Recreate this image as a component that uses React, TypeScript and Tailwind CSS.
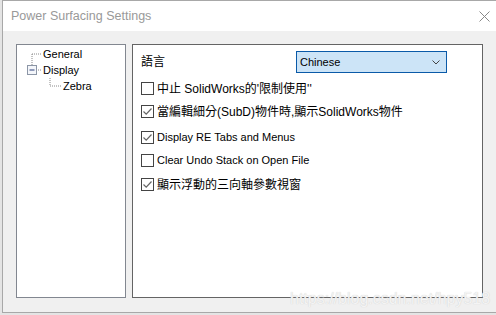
import React from 'react';

const latin = { fontFamily: '"Liberation Sans", Arial, sans-serif' };
const cjk = { fontFamily: '"Liberation Sans", "Noto Sans CJK TC", sans-serif' };

function Check({ checked }: { checked?: boolean }) {
    return (
        <div className="w-[13px] h-[13px] border border-[#444] bg-white flex items-center justify-center shrink-0">
            {checked && (
                <svg width="11" height="11" viewBox="0 0 11 11">
                    <path d="M1.5 5.5 L4.2 8.2 L9.5 2.5" fill="none" stroke="#666" strokeWidth="1.2" />
                </svg>
            )}
        </div>
    );
}

function Row({ checked, label, isCjk, mt }: { checked?: boolean; label: string; isCjk?: boolean; mt: string }) {
    return (
        <div className={`flex items-center gap-[3px] ${mt}`}>
            <Check checked={checked} />
            <span
                className={`${isCjk ? 'text-[12px]' : 'text-[11px]'} text-black leading-none whitespace-nowrap`}
                style={isCjk ? cjk : latin}
            >
                {label}
            </span>
        </div>
    );
}

export default function App() {
    return (
        <div className="w-[496px] h-[315px] bg-[#e4e4e4] relative overflow-hidden">
            <div className="ml-[2px] w-[496px] h-[313px] border border-[#a8a8a8] bg-[#f0f0f0] flex flex-col">
                {/* title bar */}
                <div className="h-[30px] bg-white flex items-center justify-between pl-[8px] pr-[7px] shrink-0">
                    <span className="text-[12.5px] text-[#999]" style={latin}>Power Surfacing Settings</span>
                    <svg width="11" height="11" viewBox="0 0 11 11">
                        <path d="M0.5 0.5 L10.5 10.5 M10.5 0.5 L0.5 10.5" stroke="#888" strokeWidth="1" />
                    </svg>
                </div>

                <div className="flex gap-[6px] pl-[13px] pt-[13px]">
                    {/* tree */}
                    <div className="w-[110px] h-[254px] border border-[#828790] bg-white pt-[1px] text-[11px] text-black" style={latin}>
                        <div className="flex items-center h-[16px] pl-[9px]">
                            <svg width="16" height="16" viewBox="0 0 16 16" className="shrink-0">
                                <path d="M6 8 L15 8 M6 8 L6 16" stroke="#888" strokeDasharray="1 1" />
                            </svg>
                            <span className="ml-[1px]">General</span>
                        </div>
                        <div className="flex items-center h-[16px] pl-[9px]">
                            <svg width="16" height="16" viewBox="0 0 16 16" className="shrink-0">
                                <path d="M6 0 L6 4 M10 8 L15 8" stroke="#888" strokeDasharray="1 1" />
                                <rect x="1.5" y="3.5" width="9" height="9" fill="#f4f6fa" stroke="#8c96a6" />
                                <path d="M3.5 8 L8.5 8" stroke="#2a3f7a" />
                            </svg>
                            <span className="ml-[1px]">Display</span>
                        </div>
                        <div className="flex items-center h-[16px] pl-[27px]">
                            <svg width="18" height="16" viewBox="0 0 18 16" className="shrink-0">
                                <path d="M6 -2 L6 8 M6 8 L17 8" stroke="#888" strokeDasharray="1 1" />
                            </svg>
                            <span className="ml-[1px]">Zebra</span>
                        </div>
                    </div>

                    {/* settings */}
                    <div className="w-[351px] h-[254px] border border-[#646464] bg-white pl-[8px] pt-[6px]">
                        <div className="flex items-center h-[22px]">
                            <span className="text-[12px] text-black w-[155px]" style={cjk}>語言</span>
                            <div className="w-[151px] h-[22px] border border-[#0a5aa8] bg-[#cce4f7] flex items-center justify-between pl-[3px] pr-[6px]">
                                <span className="text-[11px] text-black" style={latin}>Chinese</span>
                                <svg width="8" height="5" viewBox="0 0 8 5">
                                    <path d="M0.5 0.5 L4 4 L7.5 0.5" fill="none" stroke="#444" />
                                </svg>
                            </div>
                        </div>
                        <Row label="中止 SolidWorks的'限制使用''" isCjk mt="mt-[9px]" />
                        <Row checked label="當編輯細分(SubD)物件時,顯示SolidWorks物件" isCjk mt="mt-[10px]" />
                        <Row checked label="Display RE Tabs and Menus" mt="mt-[13px]" />
                        <Row label="Clear Undo Stack on Open File" mt="mt-[10px]" />
                        <Row checked label="顯示浮動的三向軸參數視窗" isCjk mt="mt-[11px]" />
                    </div>
                </div>
            </div>
            <span
                className="absolute left-[290px] top-[287px] text-[16px] text-[#f4f4f4] whitespace-nowrap"
                style={{ ...latin, textShadow: '0 0 1px #c8c8c8' }}
            >
                https://blog.csdn.net/hpy518
            </span>
        </div>
    );
}
